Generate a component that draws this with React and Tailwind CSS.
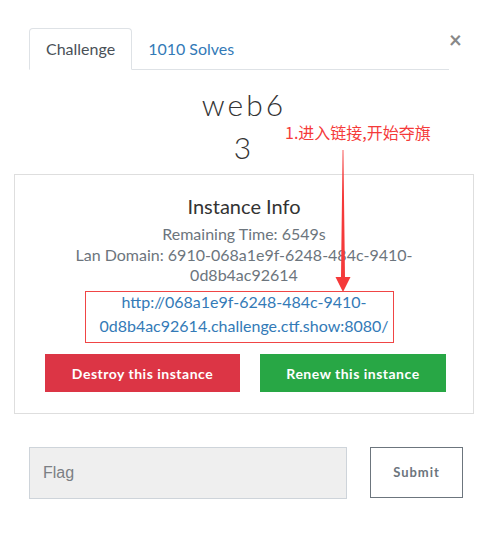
import React from 'react';

export default function App() {
  return (
    <div className="relative w-[488px] h-[543px] overflow-hidden bg-white pt-[28px] font-['Lato','Noto_Sans',sans-serif] text-[#212529]">
      {/* Tabs */}
      <div className="ml-[29px] w-[420px] flex items-end border-b border-[#dee2e6]">
        <div className="-mb-px h-[42px] px-4 flex items-center border border-[#dee2e6] border-b-white bg-white rounded-t text-[16px] text-[#495057]">
          Challenge
        </div>
        <div className="h-[41px] px-4 flex items-center text-[16px] text-[#337ab7]">1010 Solves</div>
      </div>
      <button className="absolute left-[449px] top-[29px] text-[22px] leading-none text-[#888] font-bold">×</button>

      {/* Title */}
      <div className="mt-[13px] text-center font-['Lato',sans-serif] font-light text-[30px] leading-[43px] tracking-[3px] text-[#333]">
        web6
        <br />3
      </div>

      {/* Instance box */}
      <div className="mx-[14px] mt-[5px] h-[240px] border border-[#dedede] pt-[17px] text-center">
        <h3 className="text-[20px] leading-[28px] text-[#333]">Instance Info</h3>
        <div className="mt-[4px] text-[16px] leading-[20px] text-[#6c757d]">
          <p>Remaining Time: 6549s</p>
          <p className="mt-px">
            Lan Domain: 6910-068a1e9f-6248-484c-9410-
            <br />
            0d8b4ac92614
          </p>
        </div>
        <a className="block mt-[5px] text-[16px] leading-[24px] text-[#337ab7]">
          http://068a1e9f-6248-484c-9410-
          <br />
          0d8b4ac92614.challenge.ctf.show:8080/
        </a>
        <div className="mt-[16px] flex gap-5 pl-[30px]">
          <button className="w-[195px] h-[38px] bg-[#dc3545] text-white font-bold text-[14px] tracking-[0.5px]">
            Destroy this instance
          </button>
          <button className="w-[186px] h-[38px] bg-[#28a745] text-white font-bold text-[14px] tracking-[0.5px]">
            Renew this instance
          </button>
        </div>
      </div>

      {/* Flag row */}
      <div className="mt-[33px] ml-[29px] flex items-start gap-[23px]">
        <input
          placeholder="Flag"
          className="w-[318px] h-[52px] bg-[#efefef] border border-[#ced4da] px-[13px] font-['Liberation_Sans',sans-serif] text-[16px] placeholder:text-[#7b7f84]"
        />
        <button className="w-[93px] h-[51px] border border-[#6c757d] text-[13px] font-bold tracking-[1px] text-[#6c757d]">
          Submit
        </button>
      </div>

      {/* Annotation overlay */}
      <div className="absolute left-[285px] top-[120px] text-[16px] leading-[24px] text-[#f53a3a] font-['Noto_Sans_CJK_SC',sans-serif] whitespace-nowrap">
        1.进入链接,开始夺旗
      </div>
      <svg
        className="absolute left-0 top-0 w-[488px] h-[543px] max-w-none pointer-events-none"
        viewBox="0 0 488 543"
        width="488"
        height="543"
      >
        <polygon points="342.6,150 343.4,150 345,277 350.5,277 343,292 335.5,277 341,277" fill="#f53a3a" />
        <rect x="85.5" y="291.5" width="308" height="51" fill="none" stroke="#f04545" strokeWidth="1" />
      </svg>
    </div>
  );
}
